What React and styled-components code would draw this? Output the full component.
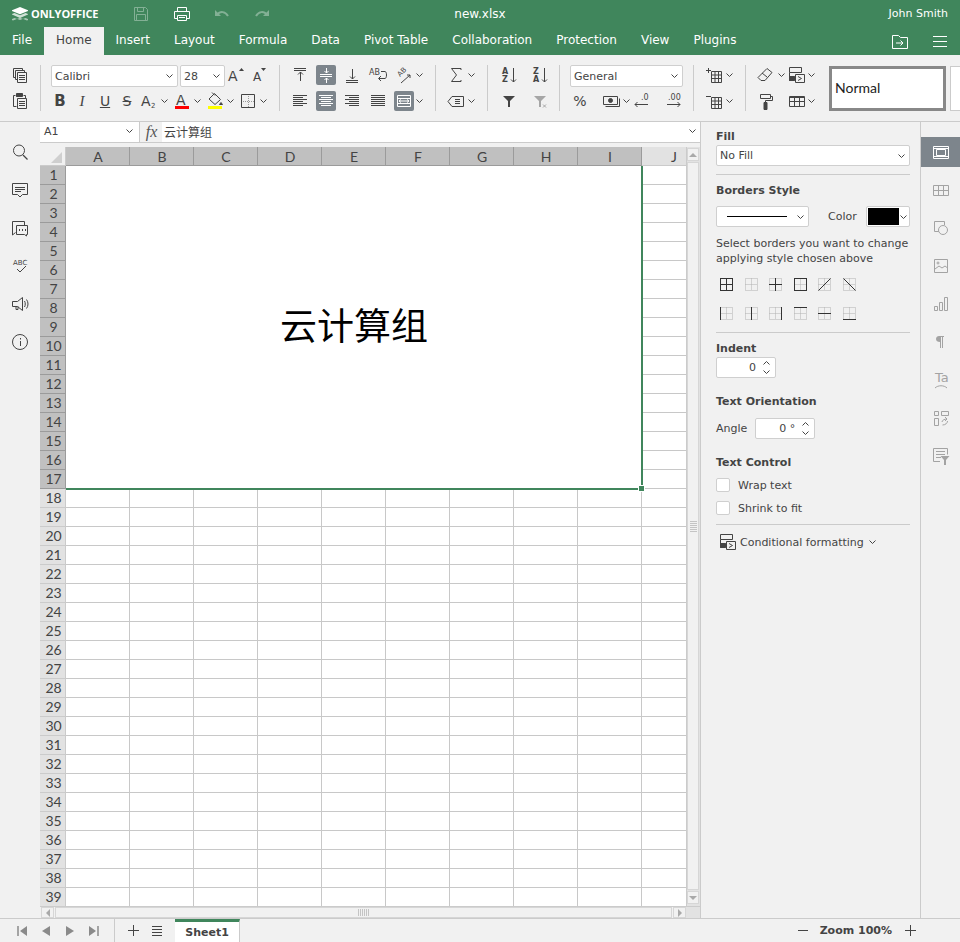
import React from 'react';
import styled, { createGlobalStyle } from 'styled-components';

const GREEN = '#40865c';
const LINE = '#cbcbcb';
const INK = '#444444';

const GlobalStyle = createGlobalStyle`
  html, body {
    margin: 0;
    padding: 0;
    background: #f1f1f1;
  }
  * {
    box-sizing: border-box;
  }
`;

const Page = styled.div`
  width: 960px;
  height: 942px;
  overflow: hidden;
  display: flex;
  flex-direction: column;
  background: #f1f1f1;
  color: ${INK};
  font-family: 'DejaVu Sans', sans-serif;
  font-size: 11px;
`;

/* header */

const Header = styled.header`
  flex: none;
  height: 55px;
  background: ${GREEN};
  color: #fff;
`;

const TitleRow = styled.div`
  height: 27px;
  display: grid;
  grid-template-columns: 1fr auto 1fr;
  align-items: center;
`;

const TitleLeft = styled.div`
  display: flex;
  align-items: center;
  padding-left: 12px;
`;

const Brand = styled.span`
  width: 100px;
  margin-left: 3px;
  font-family: 'Open Sans', sans-serif;
  font-weight: 700;
  font-size: 11px;
  letter-spacing: -0.1px;
`;

const HeadIcon = styled.span`
  display: flex;
  width: 20px;
  height: 20px;
  margin-left: ${(p) => p.$ml || 0}px;
  margin-right: 20px;
  opacity: ${(p) => (p.$dim ? 0.35 : 1)};
`;

const FileName = styled.div`
  font-size: 12px;
`;

const UserName = styled.div`
  justify-self: end;
  padding-right: 12px;
  font-size: 11px;
`;

const TabRow = styled.div`
  height: 28px;
  display: flex;
  align-items: stretch;
`;

const Tab = styled.div`
  padding: 0 12px 3px;
  display: flex;
  align-items: center;
  font-size: 12px;
  background: ${(p) => (p.$active ? '#f1f1f1' : 'transparent')};
  color: ${(p) => (p.$active ? INK : '#fff')};
`;

const TabTools = styled.div`
  margin-left: auto;
  display: flex;
  align-items: center;
  gap: 20px;
  padding: 0 10px 0 0;
`;

/* toolbar */

const Toolbar = styled.div`
  flex: none;
  height: 67px;
  padding-top: 10px;
  display: flex;
  align-items: flex-start;
  border-bottom: 1px solid ${LINE};
`;

const Group = styled.div`
  flex: none;
  width: ${(p) => p.$w}px;
  padding-left: ${(p) => p.$pad || 0}px;
  display: flex;
  flex-direction: column;
  gap: 6px;
`;

const Row = styled.div`
  height: 20px;
  display: flex;
  align-items: flex-start;
  gap: ${(p) => p.$gap || 0}px;
`;

const Sep = styled.div`
  flex: none;
  width: 1px;
  height: 46px;
  background: ${LINE};
`;

const Tool = styled.div`
  flex: none;
  width: 20px;
  height: 20px;
  margin-left: ${(p) => p.$ml || 0}px;
  display: flex;
  align-items: center;
  justify-content: center;
  border-radius: 2px;
  background: ${(p) => (p.$on ? '#7d858c' : 'transparent')};
  color: ${(p) => (p.$on ? '#fff' : INK)};
`;

const Glyph = styled.span`
  font-size: ${(p) => p.$size || 13}px;
  font-weight: ${(p) => (p.$bold ? 700 : 400)};
  font-style: ${(p) => (p.$italic ? 'italic' : 'normal')};
  font-family: ${(p) => (p.$serif ? "'Liberation Serif', serif" : "'DejaVu Sans', sans-serif")};
  text-decoration: ${(p) => p.$deco || 'none'};
  line-height: 1;
`;

const CaretBox = styled.div`
  flex: none;
  width: 8px;
  height: 20px;
  margin-left: ${(p) => p.$ml || 0}px;
  display: flex;
  align-items: center;
  justify-content: center;
`;

const Combo = styled.div`
  flex: none;
  width: ${(p) => p.$w}px;
  height: ${(p) => p.$h || 22}px;
  margin-left: ${(p) => p.$ml || 0}px;
  padding: 0 4px 0 3px;
  display: flex;
  align-items: center;
  justify-content: space-between;
  background: #fff;
  border: 1px solid #cfcfcf;
  border-radius: 2px;
  color: ${INK};
`;

const StyleBox = styled.div`
  flex: none;
  height: 45px;
  margin-top: 1px;
  width: ${(p) => p.$w}px;
  margin-left: ${(p) => p.$ml || 0}px;
  padding: 0 0 2px 3px;
  display: flex;
  align-items: center;
  background: #fff;
  border: ${(p) => (p.$on ? '3px solid #888' : `1px solid ${LINE}`)};
  font-family: Lato, sans-serif;
  font-size: 14px;
  color: #222;
`;

/* main */

const Main = styled.div`
  flex: 1;
  min-height: 0;
  display: flex;
`;

const LeftBar = styled.nav`
  flex: none;
  width: 40px;
  padding-top: 15px;
  display: flex;
  flex-direction: column;
  gap: 8px;
`;

const SideSlot = styled.div`
  height: 30px;
  display: flex;
  align-items: center;
  justify-content: center;
  background: ${(p) => (p.$on ? '#7d858c' : 'transparent')};
  color: ${(p) => (p.$on ? '#fff' : p.$muted ? '#a3a3a3' : INK)};
`;

const Center = styled.div`
  flex: none;
  width: 660px;
  display: flex;
  flex-direction: column;
`;

const FormulaBar = styled.div`
  flex: none;
  height: 21px;
  display: flex;
  background: #f1f1f1;
  border-bottom: 1px solid ${LINE};
`;

const NameBox = styled.div`
  width: 100px;
  padding: 0 6px 2px 4px;
  display: flex;
  align-items: center;
  justify-content: space-between;
  background: #fff;
  border-right: 1px solid ${LINE};
`;

const FxCell = styled.div`
  width: 21px;
  margin-left: 1px;
  text-align: center;
  font-family: 'Liberation Serif', serif;
  font-style: italic;
  font-size: 16px;
  line-height: 19px;
  color: #555;
`;

const FormulaInput = styled.div`
  flex: 1;
  padding: 0 4px 2px 2px;
  display: flex;
  align-items: center;
  justify-content: space-between;
  background: #fff;
  font-family: 'Noto Sans CJK SC', sans-serif;
  font-size: 12px;
  color: #444;
`;

const Strip = styled.div`
  flex: none;
  height: 4px;
`;

const SheetArea = styled.div`
  flex: none;
  height: 759px;
  display: flex;
`;

const GridClip = styled.div`
  width: 646px;
  height: 100%;
  overflow: hidden;
  background: #fff;
`;

const Grid = styled.div`
  display: grid;
  grid-template-columns: 26px repeat(10, 64px);
  grid-template-rows: 19px repeat(39, 19px);
  font-family: Lato, sans-serif;
  font-size: 14px;
`;

const Corner = styled.div`
  position: relative;
  background: #f1f1f1;
  border-right: 1px solid ${LINE};
  border-bottom: 1px solid ${LINE};

  &::after {
    content: '';
    position: absolute;
    right: 3px;
    bottom: 2px;
    border-style: solid;
    border-width: 0 0 11px 11px;
    border-color: transparent transparent #cfcfcf transparent;
  }
`;

const ColHead = styled.div`
  display: flex;
  align-items: center;
  justify-content: center;
  padding-left: 1px;
  color: #444;
  background: ${(p) => (p.$sel ? '#c0c0c0' : '#e2e2e2')};
  border-right: 1px solid ${(p) => (p.$sel ? '#9b9b9b' : LINE)};
  border-bottom: 1px solid ${(p) => (p.$sel ? '#9b9b9b' : LINE)};
`;

const RowHead = styled(ColHead)`
  padding: 0 0 1px 2px;
`;

const Cell = styled.div`
  border-right: 1px solid #c8c8c8;
  border-bottom: 1px solid #c8c8c8;
`;

const Merged = styled.div`
  grid-column: 2 / 11;
  grid-row: 2 / 19;
  position: relative;
  padding-bottom: 8px;
  display: flex;
  align-items: center;
  justify-content: center;
  background: #fff;
  color: #000;
  font-family: 'Noto Sans CJK SC', sans-serif;
  font-size: 37px;

  &::after {
    content: '';
    position: absolute;
    inset: 0 -1px -1px 0;
    border-right: 2px solid ${GREEN};
    border-bottom: 2px solid ${GREEN};
    pointer-events: none;
  }
`;

const Handle = styled.span`
  position: absolute;
  z-index: 1;
  right: -2px;
  bottom: -2px;
  width: 5px;
  height: 5px;
  background: ${GREEN};
  box-shadow: 0 0 0 1px #fff;
`;

const VScroll = styled.div`
  width: 14px;
  height: 100%;
  padding: 1px 1px 2px 0;
  display: flex;
  flex-direction: column;
  gap: 1px;
  background: #e2e2e2;
  border-left: 1px solid ${LINE};
`;

const ScrollBtn = styled.div`
  flex: none;
  width: ${(p) => (p.$h ? '13px' : 'auto')};
  height: ${(p) => (p.$h ? 'auto' : '13px')};
  display: flex;
  align-items: center;
  justify-content: center;
  background: #f1f1f1;
  border: 1px solid #d6d6d6;
`;

const Arrow = styled.span`
  width: 0;
  height: 0;
  border-style: solid;
  border-color: transparent;
  ${(p) => (p.$dir === 'up' ? 'border-width: 0 4px 4px; border-bottom-color: #a9a9a9;' : '')}
  ${(p) => (p.$dir === 'down' ? 'border-width: 4px 4px 0; border-top-color: #a9a9a9;' : '')}
  ${(p) => (p.$dir === 'left' ? 'border-width: 4px 4px 4px 0; border-right-color: #a9a9a9;' : '')}
  ${(p) => (p.$dir === 'right' ? 'border-width: 4px 0 4px 4px; border-left-color: #a9a9a9;' : '')}
`;

const Thumb = styled.div`
  flex: 1;
  margin: ${(p) => (p.$h ? '0 1px' : '0')};
  display: flex;
  align-items: center;
  justify-content: center;
  background: #f1f1f1;
  border: 1px solid #d6d6d6;
`;

const GripV = styled.div`
  width: 7px;
  height: 11px;
  background: repeating-linear-gradient(to bottom, #c4c4c4 0 1px, transparent 1px 2px);
`;

const GripH = styled.div`
  width: 11px;
  height: 7px;
  background: repeating-linear-gradient(to right, #c4c4c4 0 1px, transparent 1px 2px);
`;

const HScroll = styled.div`
  flex: none;
  height: 12px;
  margin-left: 0;
  padding-left: 1px;
  display: flex;
  background: #f1f1f1;
  border-top: 1px solid ${LINE};
`;

const HTrack = styled.div`
  width: 645px;
  display: flex;
`;

const HCorner = styled.div`
  flex: 1;
  background: #e2e2e2;
`;

/* right panel */

const Panel = styled.aside`
  flex: none;
  width: 221px;
  padding: 7px 10px 0 15px;
  border-left: 1px solid ${LINE};
  border-right: 1px solid ${LINE};
`;

const Label = styled.div`
  height: 14px;
  margin-top: ${(p) => p.$mt || 0}px;
  line-height: 16px;
  font-weight: 700;
  color: ${INK};
`;

const PanelCombo = styled(Combo)`
  margin-top: ${(p) => p.$mt || 0}px;
  padding: 0 4px 0 3px;
`;

const Divider = styled.div`
  height: 1px;
  margin-top: ${(p) => p.$mt || 0}px;
  background: ${LINE};
`;

const BorderRow = styled.div`
  margin-top: 9px;
  height: 21px;
  display: flex;
  align-items: center;
`;

const LinePreview = styled.span`
  display: block;
  width: 60px;
  height: 1px;
  margin-left: 7px;
  background: #000;
`;

const FieldLabel = styled.span`
  margin-left: ${(p) => p.$ml || 0}px;
  color: ${INK};
`;

const ColorCombo = styled(Combo)`
  margin-left: 9px;
  padding: 1px 2px 1px 1px;
`;

const Swatch = styled.span`
  width: 31px;
  height: 17px;
  background: #000;
`;

const Hint = styled.p`
  margin: 9px 0 0;
  line-height: 15px;
  color: ${INK};
`;

const BorderGrid = styled.div`
  margin: 12px 0 0 4px;
  display: grid;
  grid-template-columns: repeat(6, 24.6px);
  row-gap: 16px;
`;

const Spinner = styled.div`
  flex: none;
  width: 60px;
  height: 21px;
  margin: ${(p) => p.$m || 0};
  padding-right: 5px;
  display: flex;
  align-items: center;
  justify-content: flex-end;
  gap: 7px;
  background: #fff;
  border: 1px solid #cfcfcf;
  border-radius: 2px;
`;

const SpinArrows = styled.div`
  display: flex;
  flex-direction: column;
  gap: 5px;
`;

const AngleRow = styled.div`
  margin-top: 10px;
  display: flex;
  align-items: center;
`;

const CheckRow = styled.label`
  height: 14px;
  margin-top: 9px;
  display: flex;
  align-items: center;
  gap: 8px;
`;

const Check = styled.span`
  width: 14px;
  height: 14px;
  background: #fff;
  border: 1px solid #cfcfcf;
  border-radius: 2px;
`;

const CondRow = styled.div`
  height: 20px;
  margin-top: 7px;
  padding-left: 2px;
  display: flex;
  align-items: center;
  gap: 2px;
`;

const CondCaret = styled.span`
  margin-left: 3px;
`;

const RightTabs = styled(LeftBar)`
  width: 39px;
`;

/* status bar */

const StatusBar = styled.footer`
  flex: none;
  height: 24px;
  display: flex;
  align-items: stretch;
  border-top: 1px solid ${LINE};
`;

const NavBtns = styled.div`
  width: 115px;
  padding-left: 15px;
  display: flex;
  align-items: center;
  gap: 10px;
  border-right: 1px solid ${LINE};
  color: #8a8a8a;
`;

const SheetTools = styled.div`
  width: 60px;
  padding-left: 10px;
  display: flex;
  align-items: center;
  gap: 8px;
`;

const SheetTab = styled.div`
  width: 65px;
  display: flex;
  align-items: center;
  justify-content: center;
  background: #fff;
  border-top: 3px solid ${GREEN};
  border-right: 1px solid ${LINE};
  font-weight: 700;
`;

const ZoomBox = styled.div`
  margin-left: auto;
  padding-right: 43px;
  display: flex;
  align-items: center;
  font-weight: 700;
`;

const ZoomBtn = styled.span`
  display: flex;
  margin: ${(p) => p.$m};
`;

/* icons */

const Ico = styled.svg.attrs((p) => ({
  width: p.$s || 20,
  height: p.$s || 20,
  viewBox: `0 0 ${p.$s || 20} ${p.$s || 20}`,
}))`
  display: block;
  flex: none;
  fill: none;
  stroke: currentColor;
  stroke-width: 1;
  text {
    stroke: none;
    fill: currentColor;
    font-family: 'DejaVu Sans', sans-serif;
  }
`;

const CaretGlyph = ({ up, color = INK }) => (
  <svg width="7" height="4" viewBox="0 0 7 4" style={{ display: 'block' }}>
    <path d={up ? 'M.5 3.500l3-3 3 3' : 'M.5 .5l3 3 3-3'} fill="none" stroke={color} strokeWidth="1" />
  </svg>
);

const Caret = ({ $ml }) => (
  <CaretBox $ml={$ml}>
    <CaretGlyph />
  </CaretBox>
);

const Logo = () => (
  <svg width="16" height="16" viewBox="0 0 16 16" style={{ display: 'block' }}>
    <path d="M8 12.200L1 15l-1-.4 0-1 2.500-1L8 14.400l5.500-1.900 2.500 1v1L15 15z" fill="#fff" opacity=".55" transform="translate(0 -.5)" />
    <path d="M0 8l2.500-1L8 9.200 13.500 7 16 8v.5L8 12 0 8.500z" fill="#fff" opacity=".75" />
    <path d="M8 1l8 3.300v.7L8 8.300 0 5v-.7z" fill="#fff" />
  </svg>
);

const SaveIcon = () => (
  <Ico>
    <path d="M3.500 3.500h11l2 2v11h-13z" />
    <path d="M6.500 3.500v4h6v-4M5.500 16.500v-6h9v6" />
  </Ico>
);
const PrintIcon = () => (
  <Ico>
    <path d="M5.500 7V3.500h9V7M5.500 14.500h-3v-7h15v7h-3" />
    <path d="M5.500 11.500h9v5h-9zM7 13.500h6" />
  </Ico>
);
const UndoIcon = () => (
  <Ico>
    <path d="M3 6v6h6z" fill="currentColor" stroke="none" />
    <path d="M5 11c3-4 8-4 11 1" strokeWidth="2" />
  </Ico>
);
const RedoIcon = () => (
  <Ico>
    <path d="M17 6v6h-6z" fill="currentColor" stroke="none" />
    <path d="M15 11c-3-4-8-4-11 1" strokeWidth="2" />
  </Ico>
);
const FolderIcon = () => (
  <Ico>
    <path d="M2.500 4.500h6l2 2h7v11h-15zM6 12h7M10.500 9.500L13 12l-2.500 2.500" />
  </Ico>
);
const BurgerIcon = () => (
  <Ico>
    <path d="M3 5.500h14M3 10.500h14M3 15.500h14" />
  </Ico>
);

const CopyIcon = () => (
  <Ico>
    <path d="M3.500 3.500h9v2M3.500 3.500v9h2M5.500 5.500h9v2M5.500 5.500v9h2" />
    <path d="M7.500 7.500h9v10h-9zM9 10.500h6M9 12.500h6M9 14.500h6" />
  </Ico>
);
const PasteIcon = () => (
  <Ico>
    <path d="M7 3.500V6M6.500 2.500h6v3h-6z" fill="currentColor" />
    <path d="M3.500 4.500h2M3.500 4.500v11h3M13.500 4.500h2v3" />
    <path d="M7.500 7.500h9v10h-9zM9 10.500h6M9 12.500h6M9 14.500h6" />
  </Ico>
);
const GrowIcon = ({ down }) => (
  <Ico>
    <text x={down ? '4' : '2'} y="16" fontSize={down ? 12 : 14}>A</text>
    <path d={down ? 'M12 3h5l-2.500 3z' : 'M13 6l2.500-3 2.500 3z'} fill="currentColor" stroke="none" />
  </Ico>
);
const SubIcon = () => (
  <Ico>
    <text x="1" y="15" fontSize="14">A</text>
    <text x="11" y="17" fontSize="7">2</text>
  </Ico>
);
const ColorA = () => (
  <Ico>
    <text x="4" y="14" fontSize="14">A</text>
    <path d="M3 15h14v3H3z" fill="#f00" stroke="none" />
  </Ico>
);
const BucketIcon = () => (
  <Ico>
    <path d="M9.500 2.500l6 6-5.500 5-6-5.500zM7 1.500l3 3" />
    <path d="M16 11.500l1.500 2h-3z" fill="currentColor" />
    <path d="M3 15h14v3H3z" fill="#ff0" stroke="none" />
  </Ico>
);
const BorderAll = () => (
  <Ico>
    <path d="M3.500 3.500h13v13h-13z" />
    <path d="M10.500 5v11M5 10.500h11" stroke="#999" strokeDasharray="1 1" />
  </Ico>
);
const AlignTop = () => (
  <Ico>
    <path d="M4 3.500h12M4 5.500h12M10.500 7v9M8 9.500l2.500-2.500L13 9.500" />
  </Ico>
);
const AlignMid = () => (
  <Ico>
    <path d="M4 9.500h12M4 11.500h12M10.500 3v5M8.500 6l2 2 2-2M10.500 18v-5M8.500 15l2-2 2 2" />
  </Ico>
);
const AlignBot = () => (
  <Ico>
    <path d="M4 15.500h12M4 17.500h12M10.500 4v10M8 11.500l2.500 2.500 2.500-2.500" />
  </Ico>
);
const WrapIcon = () => (
  <Ico>
    <text x="1" y="10" fontSize="8">AB</text>
    <path d="M13 6.500h4c2 0 2 7 0 7h-6M13 11l-2.500 2.500L13 16" />
  </Ico>
);
const OrientIcon = () => (
  <Ico>
    <text x="0" y="0" fontSize="7" transform="translate(6 12) rotate(-45)">AB</text>
    <path d="M7 18l9-8M13 10h3v3" />
  </Ico>
);
const TextLines = ({ kind }) => (
  <Ico>
    {[4.5, 6.5, 8.5, 10.5, 12.5, 14.5].map((y, i) => {
      const w = kind === 'just' || i % 2 === 0 ? 14 : 10;
      const x = kind === 'left' || kind === 'just' ? 3 : kind === 'right' ? 17 - w : 10 - w / 2;
      return <path key={y} d={`M${x} ${y}h${w}`} />;
    })}
  </Ico>
);
const MergeIcon = () => (
  <Ico>
    <path d="M3.500 4.500h13v11h-13zM3.500 7.500h13M3.500 12.500h13" />
    <path d="M5 10h10M7 8.500L5 10l2 1.500M13 8.500l2 1.500-2 1.500" />
  </Ico>
);
const SumIcon = () => (
  <Ico>
    <path d="M15 5V3.500H5.500L10.500 10l-5 6.500H15V15" />
  </Ico>
);
const TagIcon = () => (
  <Ico>
    <path d="M6 5.500h11.500v10H6L2 10.500zM9 8.500h5M9 10.500h5M9 12.500h5" />
  </Ico>
);
const SortIcon = ({ top, bottom }) => (
  <Ico>
    <text x="3" y="9" fontSize="8" fontWeight="700">{top}</text>
    <text x="3" y="17" fontSize="8" fontWeight="700">{bottom}</text>
    <path d="M14.500 3v14M12 14.500l2.500 2.500 2.500-2.500" />
  </Ico>
);
const FilterIcon = ({ off }) => (
  <Ico>
    <path d="M4 5h12l-5 5v6h-2v-6z" fill={off ? '#a6a6a6' : 'currentColor'} stroke="none" />
    {off && <path d="M13 13.500l3 3M16 13.500l-3 3" stroke="#a6a6a6" />}
  </Ico>
);
const MoneyIcon = () => (
  <Ico>
    <path d="M1.500 5.500h14v8h-14z" />
    <path d="M17.500 7.500v8h-14" />
    <circle cx="8.500" cy="9.500" r="2" fill="currentColor" />
  </Ico>
);
const DecIcon = ({ more }) => (
  <Ico>
    <text x={more ? 5 : 9} y="9" fontSize="8">{more ? '.00' : '.0'}</text>
    {more ? (
      <path d="M4 13.500h13M14.500 11l2.500 2.500L14.500 16" />
    ) : (
      <path d="M3 13.500h13M5.500 11L3 13.500 5.500 16" />
    )}
  </Ico>
);
const CellsIcon = ({ minus }) => (
  <Ico>
    <path d="M7.500 6.500h10v11h-10zM11 6.500v11M14.500 6.500v11M7.500 10h10M7.500 13.500h10" />
    <path d={minus ? 'M2 5.500h5' : 'M2 5.500h5M4.500 3v5'} />
  </Ico>
);
const EraserIcon = () => (
  <Ico>
    <path d="M12 3.500l5 4-7 8H6l-3-3zM7 8l5 4" />
  </Ico>
);
const CondIcon = () => (
  <Ico>
    <path d="M2.500 2.500h12v5h-12zM2.500 7.500v8h5M2.500 11.500h5" />
    <path d="M2.500 11.500h5v4h-5z" fill="currentColor" />
    <path d="M8.500 9.500h9v8h-9zM11 11.500l3.500 2-3.500 2" />
  </Ico>
);
const RollerIcon = () => (
  <Ico>
    <path d="M5.500 3.500h10v4h-10zM15.500 5.500h2v4h-7v2" />
    <path d="M9 11.500h3v7H9z" fill="currentColor" />
  </Ico>
);
const TableIcon = ({ muted }) => (
  <Ico>
    <path d="M2.500 5.500h15v10h-15zM7.500 5.500v10M12.500 5.500v10M2.500 10.500h15" />
    {!muted && <path d="M2.500 6.500h15" />}
  </Ico>
);

const SearchIcon = () => (
  <Ico>
    <circle cx="9" cy="8.500" r="5.500" />
    <path d="M13 13l4.500 4.500" strokeWidth="1.300" />
  </Ico>
);
const CommentIcon = () => (
  <Ico>
    <path d="M2.500 3.500h15v11h-5l-2.500 2.500-2.500-2.500h-5zM5 7.500h10M5 9.500h10M5 11.500h6" />
  </Ico>
);
const ChatIcon = () => (
  <Ico>
    <path d="M5.500 14.500l-3 2.500V3.500h12V7" />
    <path d="M6.500 7.500h11v9h-1v1.500l-2-1.500h-8z" />
    <path d="M9 12h1M12 12h1M15 12h1" strokeWidth="2" />
  </Ico>
);
const SpellIcon = () => (
  <Ico>
    <text x="3" y="9" fontSize="7">ABC</text>
    <path d="M7 13l3 3 6-6" />
  </Ico>
);
const SpeakerIcon = () => (
  <Ico>
    <path d="M2.500 7.500h5l5-4v13l-5-4h-5zM6 12.500v3h2v-3" />
    <path d="M14.500 7c1 1.500 1 4.500 0 6M16.500 5.500c2 2.500 2 6.500 0 9" />
  </Ico>
);
const InfoIcon = () => (
  <Ico>
    <circle cx="10" cy="10" r="7.500" />
    <path d="M10.500 9v5M10.500 6v1.500" />
  </Ico>
);

const CellSettings = () => (
  <Ico>
    <path d="M2.500 4.500h15v12h-15zM5.500 7.500h9v6h-9z" />
    <path d="M2.500 6.500h15M2.500 14.500h15" />
  </Ico>
);
const ShapeIcon = () => (
  <Ico>
    <path d="M8 13.500H3.500v-10h10V7" />
    <circle cx="12" cy="12" r="4.500" fill="#f1f1f1" />
  </Ico>
);
const PictureIcon = () => (
  <Ico>
    <path d="M3.500 3.500h13v13h-13zM4 13l4-3 3 2 3-2 2 1.500" />
    <circle cx="7" cy="7" r="1" />
  </Ico>
);
const ChartIcon = () => (
  <Ico>
    <path d="M3.500 12.500h3v4h-3zM8.500 8.500h3v8h-3zM13.500 3.500h3v13h-3z" />
  </Ico>
);
const ParaIcon = () => (
  <Ico>
    <path d="M8 4h5v1H12v11h-1V5h-1v11H9v-6c-2.500 0-4-1-4-3s1.500-3 3-3z" fill="currentColor" stroke="none" />
  </Ico>
);
const ArtIcon = () => (
  <Ico>
    <text x="4" y="12" fontSize="13">Ta</text>
    <path d="M4 18c3-3 9-3 12 0" />
  </Ico>
);
const PivotIcon = () => (
  <Ico>
    <path d="M3.500 3.500h4v4h-4zM10.500 3.500h7v4h-7zM3.500 10.500h4v7h-4zM11 14c0-2 3-3 5-3M14 9l2 2-2 2M16.500 13c0 2-2 4-5 4" />
  </Ico>
);
const PivotSlicer = () => (
  <Ico>
    <path d="M9 15.500H2.500v-13h14v6M5 5.500h9M5 8.500h9M5 11.500h5" />
    <path d="M9.500 10h9l-3.500 4v5h-2v-5z" fill="currentColor" stroke="none" />
  </Ico>
);

// small preset picker: dotted grid with the solid edges on top
const BORDER_PATHS = {
  l: 'M.5 0v13',
  r: 'M12.500 0v13',
  t: 'M0 .5h13',
  b: 'M0 12.500h13',
  v: 'M6.500 0v13',
  h: 'M0 6.500h13',
  up: 'M.5 12.500l12-12',
  down: 'M.5 .5l12 12',
};

const BorderPreset = ({ solid }) => (
  <svg width="13" height="13" viewBox="0 0 13 13" style={{ display: 'block' }}>
    <path
      d="M.5 .5h12v12H.5zM6.500 .5v12M.5 6.500h12"
      fill="none"
      stroke="#b0b0b0"
      strokeDasharray="1 1"
    />
    {solid.map((k) => (
      <path key={k} d={BORDER_PATHS[k]} fill="none" stroke="#333" />
    ))}
  </svg>
);

const PRESETS = [
  ['l', 'r', 't', 'b', 'v', 'h'],
  [],
  ['v', 'h'],
  ['l', 'r', 't', 'b'],
  ['up'],
  ['down'],
  ['l'],
  ['v'],
  ['r'],
  ['t'],
  ['h'],
  ['b'],
];

const NavArrow = ({ dir, stop }) => (
  <svg width="14" height="14" viewBox="0 0 14 14" style={{ display: 'block' }}>
    {dir === 'left' ? (
      <path d={stop ? 'M12 2v10L5 7z' : 'M11 2v10L3 7z'} fill="currentColor" />
    ) : (
      <path d={stop ? 'M2 2v10l7-5z' : 'M3 2v10l8-5z'} fill="currentColor" />
    )}
    {stop && <path d={dir === 'left' ? 'M3 2v10' : 'M11 2v10'} stroke="currentColor" strokeWidth="1.500" />}
  </svg>
);

const Plus = () => (
  <svg width="13" height="13" viewBox="0 0 13 13" style={{ display: 'block' }}>
    <path d="M6.500 1v11M1 6.500h11" stroke="#444" />
  </svg>
);

const Minus = () => (
  <svg width="13" height="13" viewBox="0 0 13 13" style={{ display: 'block' }}>
    <path d="M1 6.500h10" stroke="#444" />
  </svg>
);

const ListIcon = () => (
  <svg width="12" height="12" viewBox="0 0 12 12" style={{ display: 'block' }}>
    <path d="M1 1.500h10M1 4.500h10M1 7.500h10M1 10.500h10" stroke="#444" />
  </svg>
);

const TABS = ['File', 'Home', 'Insert', 'Layout', 'Formula', 'Data', 'Pivot Table', 'Collaboration', 'Protection', 'View', 'Plugins'];
const COLS = ['A', 'B', 'C', 'D', 'E', 'F', 'G', 'H', 'I', 'J'];
const ROWS = Array.from({ length: 39 }, (_, i) => i + 1);

const Sheet = () => (
  <Grid>
    <Corner />
    {COLS.map((c) => (
      <ColHead key={c} $sel={c !== 'J'}>{c}</ColHead>
    ))}
    <Merged>
      云计算组
      <Handle />
    </Merged>
    {ROWS.map((r) => (
      <React.Fragment key={r}>
        <RowHead $sel={r <= 17}>{r}</RowHead>
        {COLS.filter((c) => r > 17 || c === 'J').map((c) => (
          <Cell key={c} />
        ))}
      </React.Fragment>
    ))}
  </Grid>
);

const App = () => (
  <Page>
    <GlobalStyle />
    <Header>
      <TitleRow>
        <TitleLeft>
          <Logo />
          <Brand>ONLYOFFICE</Brand>
          <HeadIcon $dim><SaveIcon /></HeadIcon>
          <HeadIcon $ml={1}><PrintIcon /></HeadIcon>
          <HeadIcon $dim><UndoIcon /></HeadIcon>
          <HeadIcon $dim><RedoIcon /></HeadIcon>
        </TitleLeft>
        <FileName>new.xlsx</FileName>
        <UserName>John Smith</UserName>
      </TitleRow>
      <TabRow>
        {TABS.map((t) => (
          <Tab key={t} $active={t === 'Home'}>{t}</Tab>
        ))}
        <TabTools>
          <FolderIcon />
          <BurgerIcon />
        </TabTools>
      </TabRow>
    </Header>

    <Toolbar>
      <Group $w={40} $pad={10}>
        <Row><Tool><CopyIcon /></Tool></Row>
        <Row><Tool><PasteIcon /></Tool></Row>
      </Group>
      <Sep />
      <Group $w={238} $pad={10}>
        <Row>
          <Combo $w={127}>Calibri<CaretGlyph /></Combo>
          <Combo $w={45} $ml={2}>28<CaretGlyph /></Combo>
          <Tool $ml={1}><GrowIcon /></Tool>
          <Tool $ml={3}><GrowIcon down /></Tool>
        </Row>
        <Row>
          <Tool $ml={-1}><Glyph $bold $size={15}>B</Glyph></Tool>
          <Tool $ml={2}><Glyph $italic $serif $size={15}>I</Glyph></Tool>
          <Tool $ml={3}><Glyph $deco="underline" $size={14}>U</Glyph></Tool>
          <Tool $ml={2}><Glyph $deco="line-through" $size={14}>S</Glyph></Tool>
          <Tool $ml={3}><SubIcon /></Tool>
          <Caret />
          <Tool $ml={4}><ColorA /></Tool>
          <Caret $ml={1} />
          <Tool $ml={4}><BucketIcon /></Tool>
          <Caret $ml={1} />
          <Tool $ml={4}><BorderAll /></Tool>
          <Caret $ml={1} />
        </Row>
      </Group>
      <Sep />
      <Group $w={155} $pad={10}>
        <Row $gap={6}>
          <Tool><AlignTop /></Tool>
          <Tool $on><AlignMid /></Tool>
          <Tool><AlignBot /></Tool>
          <Tool><WrapIcon /></Tool>
          <Tool><OrientIcon /></Tool>
          <Caret $ml={-5} />
        </Row>
        <Row $gap={6}>
          <Tool><TextLines kind="left" /></Tool>
          <Tool $on><TextLines kind="center" /></Tool>
          <Tool><TextLines kind="right" /></Tool>
          <Tool><TextLines kind="just" /></Tool>
          <Tool $on><MergeIcon /></Tool>
          <Caret $ml={-5} />
        </Row>
      </Group>
      <Sep />
      <Group $w={51} $pad={10}>
        <Row><Tool><SumIcon /></Tool><Caret $ml={1} /></Row>
        <Row><Tool><TagIcon /></Tool><Caret $ml={1} /></Row>
      </Group>
      <Sep />
      <Group $w={71} $pad={11}>
        <Row $gap={11}>
          <Tool><SortIcon top="A" bottom="Z" /></Tool>
          <Tool><SortIcon top="Z" bottom="A" /></Tool>
        </Row>
        <Row $gap={11}>
          <Tool><FilterIcon /></Tool>
          <Tool><FilterIcon off /></Tool>
        </Row>
      </Group>
      <Sep />
      <Group $w={133} $pad={10}>
        <Row><Combo $w={113}>General<CaretGlyph /></Combo></Row>
        <Row>
          <Tool><Glyph $size={14}>%</Glyph></Tool>
          <Tool $ml={12}><MoneyIcon /></Tool>
          <Caret />
          <Tool $ml={2}><DecIcon /></Tool>
          <Tool $ml={11}><DecIcon more /></Tool>
        </Row>
      </Group>
      <Sep />
      <Group $w={51} $pad={10}>
        <Row><Tool><CellsIcon /></Tool><Caret $ml={1} /></Row>
        <Row><Tool><CellsIcon minus /></Tool><Caret $ml={1} /></Row>
      </Group>
      <Sep />
      <Group $w={83} $pad={9}>
        <Row>
          <Tool><EraserIcon /></Tool>
          <Caret $ml={2} />
          <Tool $ml={2}><CondIcon /></Tool>
          <Caret />
        </Row>
        <Row>
          <Tool><RollerIcon /></Tool>
          <Tool $ml={12}><TableIcon /></Tool>
          <Caret />
        </Row>
      </Group>
      <StyleBox $on $w={117}>Normal</StyleBox>
      <StyleBox $w={14} $ml={4} />
    </Toolbar>

    <Main>
      <LeftBar>
        <SideSlot><SearchIcon /></SideSlot>
        <SideSlot><CommentIcon /></SideSlot>
        <SideSlot><ChatIcon /></SideSlot>
        <SideSlot><SpellIcon /></SideSlot>
        <SideSlot><SpeakerIcon /></SideSlot>
        <SideSlot><InfoIcon /></SideSlot>
      </LeftBar>

      <Center>
        <FormulaBar>
          <NameBox>A1<CaretGlyph /></NameBox>
          <FxCell>fx</FxCell>
          <FormulaInput>云计算组<CaretGlyph /></FormulaInput>
        </FormulaBar>
        <Strip />
        <SheetArea>
          <GridClip><Sheet /></GridClip>
          <VScroll>
            <ScrollBtn><Arrow $dir="up" /></ScrollBtn>
            <Thumb><GripV /></Thumb>
            <ScrollBtn><Arrow $dir="down" /></ScrollBtn>
          </VScroll>
        </SheetArea>
        <HScroll>
          <HTrack>
            <ScrollBtn $h><Arrow $dir="left" /></ScrollBtn>
            <Thumb $h><GripH /></Thumb>
            <ScrollBtn $h><Arrow $dir="right" /></ScrollBtn>
          </HTrack>
          <HCorner />
        </HScroll>
      </Center>

      <Panel>
        <Label>Fill</Label>
        <PanelCombo $w={194} $h={21} $mt={2}>No Fill<CaretGlyph /></PanelCombo>
        <Divider $mt={8} />
        <Label $mt={8}>Borders Style</Label>
        <BorderRow>
          <Combo $w={93} $h={21}><LinePreview /><CaretGlyph /></Combo>
          <FieldLabel $ml={19}>Color</FieldLabel>
          <ColorCombo $w={44} $h={21}><Swatch /><CaretGlyph /></ColorCombo>
        </BorderRow>
        <Hint>
          Select borders you want to change
          <br />
          applying style chosen above
        </Hint>
        <BorderGrid>
          {PRESETS.map((solid, i) => (
            <BorderPreset key={i} solid={solid} />
          ))}
        </BorderGrid>
        <Divider $mt={12} />
        <Label $mt={8}>Indent</Label>
        <Spinner $m="2px 0 0">
          0
          <SpinArrows><CaretGlyph up /><CaretGlyph /></SpinArrows>
        </Spinner>
        <Label $mt={16}>Text Orientation</Label>
        <AngleRow>
          <FieldLabel>Angle</FieldLabel>
          <Spinner $m="0 0 0 8px">
            0 °
            <SpinArrows><CaretGlyph up /><CaretGlyph /></SpinArrows>
          </Spinner>
        </AngleRow>
        <Label $mt={16}>Text Control</Label>
        <CheckRow><Check />Wrap text</CheckRow>
        <CheckRow><Check />Shrink to fit</CheckRow>
        <Divider $mt={9} />
        <CondRow>
          <CondIcon />
          Conditional formatting
          <CondCaret><CaretGlyph /></CondCaret>
        </CondRow>
      </Panel>

      <RightTabs>
        <SideSlot $on><CellSettings /></SideSlot>
        <SideSlot $muted><TableIcon muted /></SideSlot>
        <SideSlot $muted><ShapeIcon /></SideSlot>
        <SideSlot $muted><PictureIcon /></SideSlot>
        <SideSlot $muted><ChartIcon /></SideSlot>
        <SideSlot $muted><ParaIcon /></SideSlot>
        <SideSlot $muted><ArtIcon /></SideSlot>
        <SideSlot $muted><PivotIcon /></SideSlot>
        <SideSlot $muted><PivotSlicer /></SideSlot>
      </RightTabs>
    </Main>

    <StatusBar>
      <NavBtns>
        <NavArrow dir="left" stop />
        <NavArrow dir="left" />
        <NavArrow dir="right" />
        <NavArrow dir="right" stop />
      </NavBtns>
      <SheetTools>
        <ZoomBtn $m="0 3px 0 2px"><Plus /></ZoomBtn>
        <ListIcon />
      </SheetTools>
      <SheetTab>Sheet1</SheetTab>
      <ZoomBox>
        <ZoomBtn $m="0 10px 0 0"><Minus /></ZoomBtn>
        Zoom 100%
        <ZoomBtn $m="0 0 0 12px"><Plus /></ZoomBtn>
      </ZoomBox>
    </StatusBar>
  </Page>
);

export default App;
